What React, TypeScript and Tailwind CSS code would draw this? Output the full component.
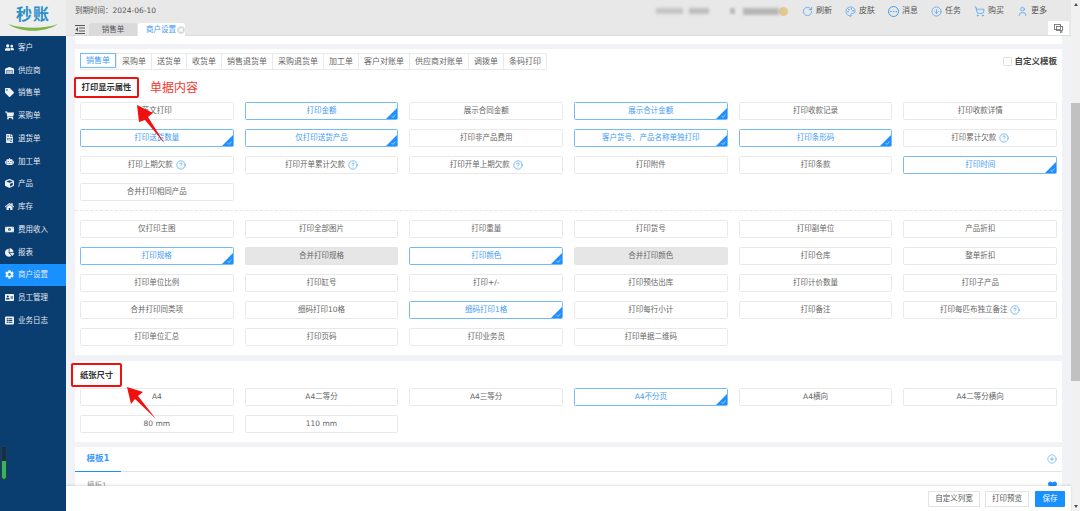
import { CircleArrowDown, CircleHelp, CirclePlus, Ellipsis, Palette, RotateCw, ShoppingCart, User } from "lucide-react";
import {
  FaAddressCard,
  FaChartPie,
  FaCog,
  FaCube,
  FaFileInvoice,
  FaHeart,
  FaHome,
  FaListAlt,
  FaMoneyBillAlt,
  FaRobot,
  FaShoppingCart,
  FaTag,
  FaTimesCircle,
  FaUserFriends,
  FaWarehouse,
} from "react-icons/fa";
import type { ReactNode } from "react";

const FONT = "[font-family:'DejaVu_Sans','Noto_Sans_CJK_SC',sans-serif]";

const NAV = [
  { label: "客户", icon: <FaUserFriends /> },
  { label: "供应商", icon: <FaWarehouse /> },
  { label: "销售单", icon: <FaTag /> },
  { label: "采购单", icon: <FaShoppingCart /> },
  { label: "退货单", icon: <FaFileInvoice /> },
  { label: "加工单", icon: <FaRobot /> },
  { label: "产品", icon: <FaCube /> },
  { label: "库存", icon: <FaHome /> },
  { label: "费用收入", icon: <FaMoneyBillAlt /> },
  { label: "报表", icon: <FaChartPie /> },
  { label: "商户设置", icon: <FaCog />, active: true },
  { label: "员工管理", icon: <FaAddressCard /> },
  { label: "业务日志", icon: <FaListAlt /> },
];

const ACTIONS = [
  { label: "刷新", icon: <RotateCw size={11} strokeWidth={1.5} /> },
  { label: "皮肤", icon: <Palette size={11} strokeWidth={1.5} /> },
  { label: "消息", icon: <Ellipsis size={11} strokeWidth={1.5} className="rounded-full border border-[#3f9bf5]" /> },
  { label: "任务", icon: <CircleArrowDown size={11} strokeWidth={1.5} /> },
  { label: "购买", icon: <ShoppingCart size={11} strokeWidth={1.5} /> },
  { label: "更多", icon: <User size={11} strokeWidth={1.5} /> },
];

const DOC_TABS = [
  "销售单",
  "采购单",
  "送货单",
  "收货单",
  "销售退货单",
  "采购退货单",
  "加工单",
  "客户对账单",
  "供应商对账单",
  "调拨单",
  "条码打印",
];

type Opt = { text: string; on?: boolean; off?: boolean; help?: boolean };

const GROUP_ONE: Opt[] = [
  { text: "英文打印" },
  { text: "打印金额", on: true },
  { text: "展示合同金额" },
  { text: "展示合计金额", on: true },
  { text: "打印收款记录" },
  { text: "打印收款详情" },
  { text: "打印送货数量", on: true },
  { text: "仅打印送货产品", on: true },
  { text: "打印非产品费用" },
  { text: "客户货号、产品名称单独打印", on: true },
  { text: "打印条形码", on: true },
  { text: "打印累计欠款", help: true },
  { text: "打印上期欠款", help: true },
  { text: "打印开单累计欠款", help: true },
  { text: "打印开单上期欠款", help: true },
  { text: "打印附件" },
  { text: "打印条款" },
  { text: "打印时间", on: true },
  { text: "合并打印相同产品" },
];

const GROUP_TWO: Opt[] = [
  { text: "仅打印主图" },
  { text: "打印全部图片" },
  { text: "打印重量" },
  { text: "打印货号" },
  { text: "打印副单位" },
  { text: "产品折扣" },
  { text: "打印规格", on: true },
  { text: "合并打印规格", off: true },
  { text: "打印颜色", on: true },
  { text: "合并打印颜色", off: true },
  { text: "打印仓库" },
  { text: "整单折扣" },
  { text: "打印单位比例" },
  { text: "打印缸号" },
  { text: "打印+/-" },
  { text: "打印预估出库" },
  { text: "打印计价数量" },
  { text: "打印子产品" },
  { text: "合并打印同类项" },
  { text: "细码打印10格" },
  { text: "细码打印1格", on: true },
  { text: "打印每行小计" },
  { text: "打印备注" },
  { text: "打印每匹布独立备注", help: true },
  { text: "打印单位汇总" },
  { text: "打印页码" },
  { text: "打印业务员" },
  { text: "打印单据二维码" },
];

const PAPER: Opt[] = [
  { text: "A4" },
  { text: "A4二等分" },
  { text: "A4三等分" },
  { text: "A4不分页", on: true },
  { text: "A4横向" },
  { text: "A4二等分横向" },
  { text: "80 mm" },
  { text: "110 mm" },
];

const OptionButton = ({ opt }: { opt: Opt }) => {
  let tone = "border-[#e9e9e9] bg-white text-[#666]";
  if (opt.on) tone = "border-[#74b9fb] bg-white text-[#3f9bf5]";
  if (opt.off) tone = "border-[#e6e6e6] bg-[#e6e6e6] text-[#666]";
  return (
    <div
      className={`relative flex h-[18px] items-center justify-center gap-[3px] overflow-hidden rounded-[1.5px] border text-[7.5px] ${tone}`}
    >
      <span>{opt.text}</span>
      {opt.help && <CircleHelp size={10} strokeWidth={1.6} className="text-[#3f9bf5]" />}
      {opt.on && (
        <svg className="absolute right-0 bottom-0 h-[11px] w-[11px]" viewBox="0 0 11 11">
          <polygon points="11,0 11,11 0,11" fill="#1f8fff" />
          <path d="M5.5 8 L7 9.5 L9.5 6.5" stroke="#cfe6ff" strokeWidth="0.7" fill="none" />
        </svg>
      )}
    </div>
  );
};

const OptionGrid = ({ items }: { items: Opt[] }) => (
  <div className="grid grid-cols-6 gap-x-[11px] gap-y-[9px]">
    {items.map((opt) => (
      <OptionButton key={opt.text} opt={opt} />
    ))}
  </div>
);

const Card = ({ children, className = "" }: { children: ReactNode; className?: string }) => (
  <section className={`bg-white ${className}`}>{children}</section>
);

const Sidebar = () => (
  <aside className="flex w-[66px] shrink-0 flex-col bg-[#0b3e70]">
    <div className="flex h-[36px] flex-col items-center bg-[#eeeeee] pt-[6px]">
      <span className="text-[16px] leading-[18px] font-bold tracking-[1px] text-[#2b8fc9]">秒账</span>
      <svg width="50" height="7" viewBox="0 0 50 7">
        <path d="M0 0 C14 5 36 5 50 0 C38 9 12 9 0 0 Z" fill="#7ab648" />
      </svg>
    </div>
    <nav className="flex flex-col">
      {NAV.map((item) => (
        <div
          key={item.label}
          className={`flex h-[22.75px] items-center gap-[4px] pl-[5px] text-[7.5px] text-[#e2e8f0] ${
            item.active ? "bg-[#1890ff]" : ""
          }`}
        >
          <span className="text-[9px] text-[#eef2f6]">{item.icon}</span>
          {item.label}
        </div>
      ))}
    </nav>
    <div className="mt-auto mb-[31px] ml-[1px] flex h-[34px] w-[6px] flex-col justify-end overflow-hidden rounded-[2px] border border-[#2b3d4c] bg-[#12304a]">
      <div className="h-[18px] rounded-b-[2px] bg-[#35b558]" />
    </div>
  </aside>
);

const TopBar = () => (
  <header className="relative h-[36px] shrink-0 border-b border-[#dcdcdc] bg-[#e8e8e8]">
    <div className="flex h-[22px] items-center pr-[24px] pl-[9px]">
      <span className="text-[7.5px] text-[#555]">到期时间：2024-06-10</span>
      <div className="mr-[14px] ml-auto flex items-center">
        <span className="h-[6px] w-[27px] bg-[#c4c4c4] blur-[1.5px]" />
        <span className="ml-[6px] h-[6px] w-[20px] bg-[#bdbdbd] blur-[1.5px]" />
        <span className="ml-[21px] h-[6px] w-[5px] bg-[#bbbbbb] blur-[1px]" />
        <span className="ml-[8px] h-[7px] w-[36px] bg-[#b5b5b5] blur-[1.5px]" />
        <span className="h-[9px] w-[9px] rounded-full bg-[#e3c98f]" />
      </div>
      <div className="flex items-center gap-[13px]">
        {ACTIONS.map((a) => (
          <div key={a.label} className="flex items-center gap-[3px] text-[8px] text-[#555]">
            <span className="text-[#3f9bf5]">{a.icon}</span>
            {a.label}
          </div>
        ))}
      </div>
    </div>
    <div className="flex h-[14px] items-end pl-[9px]">
      <svg width="10" height="9" viewBox="0 0 10 9" className="mr-[4px] mb-[2px]" stroke="#555" strokeWidth="1">
        <path d="M0 .5 H10 M4 3 H10 M4 6 H10 M0 8.5 H10" />
        <path d="M3 2 L0.5 4.5 L3 7 Z" fill="#555" stroke="none" />
      </svg>
      <div className="flex h-[13px] w-[48px] items-center justify-center rounded-t-[3px] bg-[#dadada] text-[7.5px] text-[#555]">
        销售单
      </div>
      <div className="ml-[1px] flex h-[13px] w-[47px] items-center gap-[1px] rounded-t-[3px] bg-white pl-[8px] text-[7.5px] text-[#3f9bf5]">
        商户设置
        <FaTimesCircle className="text-[8px] text-[#d8d8d8]" />
      </div>
    </div>
    <div className="absolute right-[2px] bottom-0 flex h-[14px] w-[21px] items-center justify-center bg-white">
      <svg width="9" height="9" viewBox="0 0 9 9" fill="none" stroke="#666" strokeWidth="0.8">
        <rect x="0.5" y="0.5" width="6" height="5" />
        <rect x="2.5" y="2.5" width="6" height="4" />
        <path d="M6 7 L8.5 8.8 M8.5 7 L6 8.8" />
      </svg>
    </div>
  </header>
);

const Content = () => (
  <div className="flex-1 overflow-hidden bg-[#f0f2f5] px-[9px]">
    <div className="h-[8px] bg-white" />
    <div className="h-[5px]" />
    <Card className="px-[5px] pt-[4px] pb-[9px]">
      <div className="flex items-center justify-between">
        <div className="flex h-[17px] border border-[#eaeaea]">
          {DOC_TABS.map((tab, i) => (
            <div
              key={tab}
              className={`flex h-full items-center px-[5px] text-[8px] ${
                i === 0
                  ? "-my-px -ml-px h-[17px] border border-[#74b9fb] text-[#3f9bf5]"
                  : "border-l border-[#eaeaea] text-[#666]"
              }`}
            >
              {tab}
            </div>
          ))}
        </div>
        <label className="flex items-center gap-[2px] text-[8.5px] font-bold text-[#444]">
          <span className="h-[9px] w-[9px] rounded-[1.5px] border border-[#ddd] bg-white" />
          自定义模板
        </label>
      </div>
      <div className="mt-[7px] -ml-[6px] flex items-center">
        <div className="flex h-[21px] w-[65px] items-center justify-center rounded-[2px] border-2 border-[#f01010] bg-white text-[8.3px] font-bold text-[#333]">
          打印显示属性
        </div>
        <span className="ml-[11px] text-[12px] text-[#f5352b]">单据内容</span>
      </div>
      <div className="mt-[4px]">
        <OptionGrid items={GROUP_ONE} />
      </div>
      <div className="-mx-[5px] mt-[9px] border-t border-dashed border-[#e6e6e6]" />
      <div className="mt-[9px]">
        <OptionGrid items={GROUP_TWO} />
      </div>
    </Card>
    <div className="h-[6px]" />
    <Card className="px-[5px] pt-[2px] pb-[9px]">
      <div className="-ml-[9px] flex h-[24px] w-[51px] items-center justify-center rounded-[2px] border-2 border-[#f01010] bg-white text-[8.3px] font-bold text-[#333]">
        纸张尺寸
      </div>
      <div className="mt-[1px]">
        <OptionGrid items={PAPER} />
      </div>
    </Card>
    <div className="h-[5px]" />
    <Card className="h-[60px]">
      <div className="flex h-[25px] items-center justify-between border-b border-[#e3e3e3]">
        <div className="flex h-[25px] w-[46px] items-center justify-center border-b border-[#1890ff] text-[8.5px] font-bold text-[#3f9bf5]">
          模板1
        </div>
        <CirclePlus size={10} strokeWidth={1.4} className="mr-[5px] text-[#3f9bf5]" />
      </div>
      <div className="flex items-center justify-between pt-[8px] pr-[5px] pl-[12px] text-[7.5px] text-[#999]">
        <span>模板1</span>
        <FaHeart className="text-[9px] text-[#1f8fff]" />
      </div>
    </Card>
  </div>
);

const Footer = () => (
  <footer className="relative z-10 flex h-[25px] shrink-0 items-center justify-end gap-[5px] bg-white pr-[6px] shadow-[0_-1px_2px_rgba(0,0,0,0.12)]">
    <div className="flex h-[16px] w-[52px] items-center justify-center border border-[#e4e4e4] text-[7.5px] text-[#555]">
      自定义列宽
    </div>
    <div className="flex h-[16px] w-[44px] items-center justify-center border border-[#e4e4e4] text-[7.5px] text-[#555]">
      打印预览
    </div>
    <div className="ml-[1px] flex h-[16px] w-[30px] items-center justify-center rounded-[1px] bg-[#1890ff] text-[7.5px] text-white">
      保存
    </div>
  </footer>
);

const Scrollbar = () => (
  <div className="flex w-[9px] shrink-0 flex-col items-center justify-between bg-[#f1f1f1] py-[3px]">
    <span className="h-0 w-0 border-x-[2.5px] border-b-[3px] border-x-transparent border-b-[#505050]" />
    <div className="mt-[97px] mb-[124px] w-full flex-1 bg-[#c1c1c1]" />
    <span className="h-0 w-0 border-x-[2.5px] border-t-[3px] border-x-transparent border-t-[#505050]" />
  </div>
);

export default function App() {
  return (
    <div className={`relative flex h-[511px] w-[1080px] overflow-hidden ${FONT}`}>
      <Sidebar />
      <main className="flex min-w-0 flex-1 flex-col">
        <TopBar />
        <Content />
        <Footer />
      </main>
      <Scrollbar />
      <svg className="pointer-events-none absolute top-0 left-0 z-20 h-[511px] w-[1080px]" viewBox="0 0 1080 511">
        <polygon points="137,105 153,113 148,117 165,144 145,120 139,122" fill="#f01010" />
        <polygon points="127,387 143,392 138,396 156,419 135,399 131,404" fill="#f01010" />
      </svg>
    </div>
  );
}
